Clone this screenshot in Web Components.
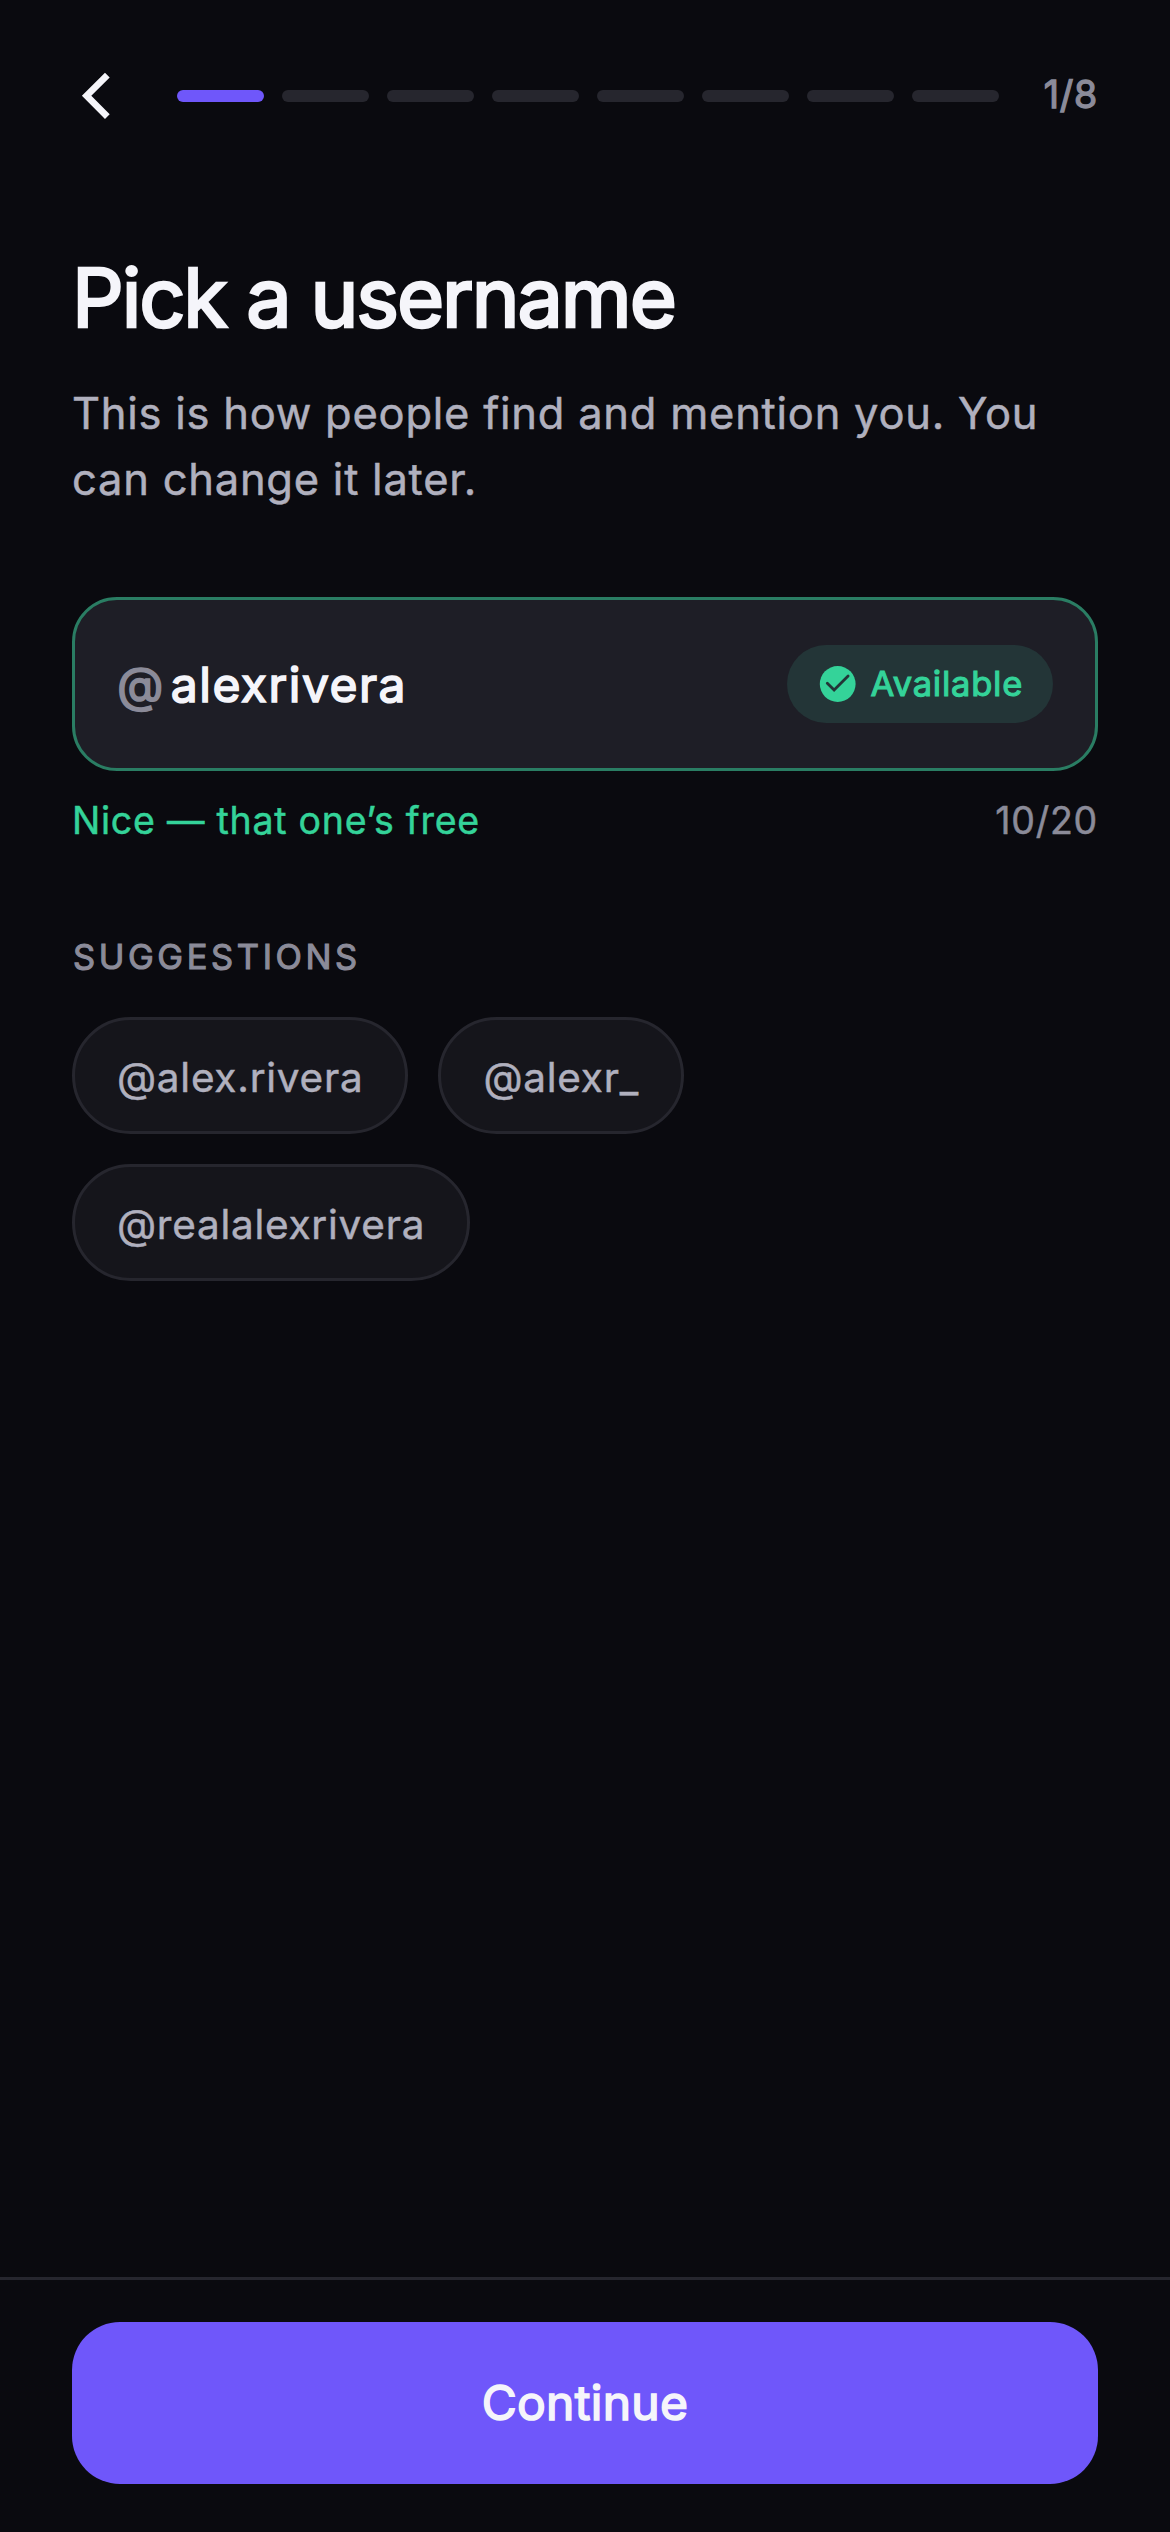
<!DOCTYPE html>
<html lang="en">
<head>
<meta charset="utf-8">
<title>Pick a username</title>
<style>
  :root {
    --bg: #0a0a0f;
    --surface: #15151b;
    --field: #1e1e26;
    --line: #26262e;
    --text: #f5f5fa;
    --text-2: #b0b0be;
    --text-3: #8b8b99;
    --accent: #6f57fa;
    --ok: #34d399;
  }
  html, body { margin: 0; background: var(--bg); }
  body {
    font-family: Inter, "Liberation Sans", sans-serif;
    font-weight: 400;
    letter-spacing: 0.75px;
    color: var(--text);
  }
</style>
</head>
<body>
<onboarding-screen>
  <step-header slot="header" step="1" total="8"></step-header>
  <page-intro>
    <span slot="title">Pick a username</span>
    This is how people find and mention you. You can change it later.
  </page-intro>
  <username-field value="alexrivera" max="20">
    <status-pill slot="status">Available</status-pill>
    <span slot="hint">Nice — that one’s free</span>
  </username-field>
  <suggestion-list label="SUGGESTIONS">
    <suggestion-chip>@alex.rivera</suggestion-chip>
    <suggestion-chip>@alexr_</suggestion-chip>
    <suggestion-chip>@realalexrivera</suggestion-chip>
  </suggestion-list>
  <primary-button slot="footer">Continue</primary-button>
</onboarding-screen>

<script>
  const define = (name, render) =>
    customElements.define(name, class extends HTMLElement {
      constructor() {
        super();
        this.attachShadow({ mode: 'open' });
      }
      connectedCallback() {
        this.shadowRoot.innerHTML = render(this);
      }
    });

  define('onboarding-screen', () => `
    <style>
      :host { display: flex; flex-direction: column; height: 2532px; width: 1170px; background: var(--bg); }
      header { padding: 48px 72px 0; }
      main { flex: 1; padding: 106px 72px 0; }
      footer { border-top: 3px solid var(--line); padding: 42px 72px 48px; }
    </style>
    <header><slot name="header"></slot></header>
    <main><slot></slot></main>
    <footer><slot name="footer"></slot></footer>`);

  define('step-header', el => {
    const step = +el.getAttribute('step'), total = +el.getAttribute('total');
    const bars = Array.from({ length: total }, (_, i) => `<i class="${i < step ? 'on' : ''}"></i>`).join('');
    return `
    <style>
      :host { display: flex; align-items: center; gap: 45px; height: 96px; }
      svg { display: block; width: 60px; height: 60px; }
      .bars { flex: 1; display: flex; gap: 18px; }
      i { flex: 1; height: 12px; border-radius: 6px; background: var(--line); }
      i.on { background: var(--accent); }
      .count { font-size: 37.5px; line-height: 45px; padding-bottom: 3px; color: var(--text-3);
        -webkit-text-stroke: 1.3px var(--text-3); white-space: nowrap; }
    </style>
    <svg viewBox="0 0 60 60"><path fill="#f5f5fa" d="M33 6.7 37.7 11.4 19.3 29.8 37.7 48.2 33 52.9 9.9 29.8Z"/></svg>
    <div class="bars">${bars}</div>
    <div class="count">${step}/${total}</div>`;
  });

  define('page-intro', () => `
    <style>
      :host { display: block; }
      h1 { margin: 0; font-weight: 400; font-size: 81px; line-height: 96px; letter-spacing: -2.1px;
        -webkit-text-stroke: 2.6px var(--text); }
      p { margin: 34px 0 0; font-size: 43.5px; line-height: 66px; color: var(--text-2);
        -webkit-text-stroke: 0.5px var(--text-2); }
    </style>
    <h1><slot name="title"></slot></h1>
    <p><slot></slot></p>`);

  define('username-field', el => {
    const value = el.getAttribute('value'), max = el.getAttribute('max');
    return `
    <style>
      :host { display: block; margin-top: 85px; }
      .box { display: flex; align-items: center; height: 174px; box-sizing: border-box; padding: 0 42px;
        border: 3px solid #2a7d63; border-radius: 45px; background: var(--field); }
      .at, .value { font-size: 48px; line-height: 60px; padding-top: 1px; letter-spacing: 1.5px; }
      .at { color: var(--text-3); -webkit-text-stroke: 1.6px var(--text-3); margin-right: 6px; }
      .value { flex: 1; -webkit-text-stroke: 1.6px var(--text); }
      .meta { display: flex; justify-content: space-between; margin-top: 26px;
        font-size: 37.5px; line-height: 47px; color: var(--ok); -webkit-text-stroke: 0.5px; }
      .count { color: var(--text-3); }
    </style>
    <div class="box">
      <span class="at">@</span><span class="value">${value}</span>
      <slot name="status"></slot>
    </div>
    <div class="meta"><slot name="hint"></slot><span class="count">${value.length}/${max}</span></div>`;
  });

  define('status-pill', () => `
    <style>
      :host { display: flex; align-items: center; gap: 12px; height: 78px; padding: 0 30px; box-sizing: border-box;
        border-radius: 39px; background: #233537; color: var(--ok); }
      svg { display: block; width: 42px; height: 42px; }
      span { font-size: 34.5px; line-height: 41px; padding-bottom: 1px; -webkit-text-stroke: 1.1px var(--ok); }
    </style>
    <svg viewBox="-21 -21 42 42">
      <circle cx="-.3" cy="0" r="17.9" fill="#34d399"/>
      <path d="M-10.7-.7-3.9 6.1 10.1-7.9" fill="none" stroke="#233537" stroke-width="2.8" stroke-linecap="round" stroke-linejoin="miter"/>
    </svg>
    <span><slot></slot></span>`);

  define('suggestion-list', el => `
    <style>
      :host { display: block; margin-top: 92px; }
      .label { font-size: 34.5px; line-height: 41px; letter-spacing: 3.6px; color: var(--text-3);
        padding-left: 1px; -webkit-text-stroke: 1.08px var(--text-3); }
      .chips { display: flex; flex-wrap: wrap; gap: 30px; margin-top: 40px; }
    </style>
    <div class="label">${el.getAttribute('label')}</div>
    <div class="chips"><slot></slot></div>`);

  define('suggestion-chip', () => `
    <style>
      :host { display: flex; align-items: center; height: 117px; box-sizing: border-box; padding: 4px 42px 0;
        border: 3px solid var(--line); border-radius: 59px; background: var(--surface);
        font-size: 40.5px; line-height: 49px; color: var(--text-2); -webkit-text-stroke: 0.5px var(--text-2); }
    </style>
    <slot></slot>`);

  define('primary-button', () => `
    <style>
      :host { display: flex; align-items: center; justify-content: center; height: 162px; box-sizing: border-box;
        padding-bottom: 1px; border-radius: 48px; background: var(--accent);
        font-size: 48px; line-height: 60px; letter-spacing: 0.3px; -webkit-text-stroke: 1.6px var(--text); }
    </style>
    <slot></slot>`);
</script>
</body>
</html>
